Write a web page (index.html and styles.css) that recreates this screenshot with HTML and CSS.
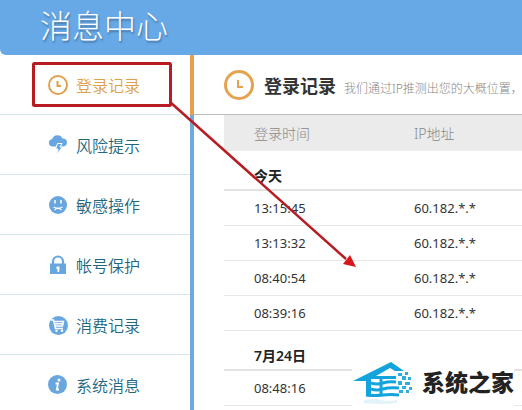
FILE: index.html
```html
<!DOCTYPE html>
<html lang="zh-CN">
<head>
    <meta charset="UTF-8">
    <meta name="viewport" content="width=device-width, initial-scale=1.0">
    <title>消息中心</title>
    <link rel="stylesheet" href="styles.css">
</head>
<body>
    <header class="header">
        <h1>消息中心</h1>
    </header>

    <div class="layout">
        <!-- Side navigation -->
        <nav class="sidebar">
            <a class="nav-item active" href="#login">
                <svg class="icon" viewBox="0 0 20 20">
                    <circle cx="10" cy="10" r="9" fill="none" stroke="currentColor" stroke-width="2"/>
                    <path d="M9.5 6v5H13" fill="none" stroke="currentColor" stroke-width="2"/>
                </svg>
                登录记录
            </a>
            <a class="nav-item" href="#risk">
                <svg class="icon" viewBox="0 0 20 20">
                    <path d="M4 11.500a3.800 3.800 0 0 1 .2-7.500A5.500 5.500 0 0 1 14.500 3.500a4 4 0 0 1 .8 8z" fill="currentColor"/>
                    <path d="M9.500 8.500h4.500l-2 3.500h2.500L8.500 19.500 10 14H7.500z" fill="currentColor" stroke="#fff" stroke-width="1"/>
                </svg>
                风险提示
            </a>
            <a class="nav-item" href="#sensitive">
                <svg class="icon" viewBox="0 0 20 20">
                    <circle cx="10" cy="10" r="9" fill="currentColor"/>
                    <path d="M7 5v3.500M13 5v3.500" fill="none" stroke="#fff" stroke-width="1.500"/>
                    <path d="M5.500 12l3 1.200h3L14.500 12M6.500 15l2-1.500h3l2 1.500" fill="none" stroke="#fff" stroke-width="1.200"/>
                </svg>
                敏感操作
            </a>
            <a class="nav-item" href="#account">
                <svg class="icon" viewBox="0 0 20 20">
                    <path d="M5 10V6.500a5 5 0 0 1 10 0V10" fill="none" stroke="currentColor" stroke-width="2.200"/>
                    <path d="M2 8.500h16V19H2z" fill="currentColor"/>
                    <path d="M8.500 11.500h3V14l-.5 3H9.500V14h-1z" fill="#fff"/>
                </svg>
                帐号保护
            </a>
            <a class="nav-item" href="#consume">
                <svg class="icon" viewBox="0 0 20 20">
                    <circle cx="10.500" cy="10.500" r="9.500" fill="currentColor"/>
                    <path d="M3 5h2.500L7.500 13.500h7.500M6 6.500h9.500l-1 4.500H7M7 8.700h8" fill="none" stroke="#fff" stroke-width="1.400"/>
                    <circle cx="8.500" cy="15.800" r="1.200" fill="#fff"/>
                    <circle cx="14" cy="15.800" r="1.200" fill="#fff"/>
                </svg>
                消费记录
            </a>
            <a class="nav-item" href="#system">
                <svg class="icon" viewBox="0 0 20 20">
                    <circle cx="9.500" cy="9.500" r="9.500" fill="currentColor"/>
                    <circle cx="11" cy="5" r="1.500" fill="#fff"/>
                    <path d="M7.500 8.500h2.500L8.800 14.500h2.200" fill="none" stroke="#fff" stroke-width="1.800"/>
                </svg>
                系统消息
            </a>
        </nav>

        <!-- Login records -->
        <main class="content">
            <div class="content-title">
                <svg class="icon-large" viewBox="0 0 30 30">
                    <circle cx="15" cy="15" r="13.500" fill="none" stroke="currentColor" stroke-width="3"/>
                    <path d="M14 10v7h5" fill="none" stroke="currentColor" stroke-width="2"/>
                </svg>
                <h2>登录记录</h2>
                <p>我们通过IP推测出您的大概位置，</p>
            </div>

            <table class="records">
                <thead>
                    <tr><th class="time">登录时间</th><th>IP地址</th></tr>
                </thead>
                <tbody>
                    <tr class="day"><th colspan="2">今天</th></tr>
                    <tr><td>13:15:45</td><td>60.182.*.*</td></tr>
                    <tr><td>13:13:32</td><td>60.182.*.*</td></tr>
                    <tr><td>08:40:54</td><td>60.182.*.*</td></tr>
                    <tr><td>08:39:16</td><td>60.182.*.*</td></tr>
                </tbody>
                <tbody>
                    <tr class="day"><th colspan="2">7月24日</th></tr>
                    <tr><td>08:48:16</td><td></td></tr>
                </tbody>
            </table>
        </main>
    </div>

    <!-- Annotation: box around the active item and the arrow -->
    <svg class="annotation" width="360" height="272" viewBox="0 0 360 272">
        <rect x="33.500" y="63.500" width="137" height="42" rx="1" fill="none" stroke="#b81c22" stroke-width="3"/>
        <path d="M170 102L346 259" stroke="#b81c22" stroke-width="2.500"/>
        <path d="M356 267l-13-3 7-9z" fill="#d8161b"/>
    </svg>

    <div class="watermark">
        <svg class="house" width="62" height="46" viewBox="0 0 62 46">
            <path d="M1 20L39 1l13 9h-9l-5-3-14 8h20v3H19v17h-5V20z" fill="#14a4dc"/>
            <path d="M19 22q6 2 12 0t13-1M19 28q6 2 12 0t16-1M14 34q9 1 17 0t16 0" fill="none" stroke="#14a4dc" stroke-width="3"/>
            <path d="M29 17v17" fill="none" stroke="#14a4dc" stroke-width="3"/>
            <path d="M46 12h4v3h-4zM53 11h3v3h-3zM50 15h4v4h-4zM56 16h3v3h-3zM46 20h4v4h-4zM53 21h5v3h-5zM50 25h4v3h-4zM57 26h3v3h-3zM47 29h4v3h-4zM54 29h3v3h-3z" fill="#2caee0"/>
            <path d="M12 39q11-2 17 0t16 0v3q-17 2-33 0z" fill="#e3f3fa"/>
        </svg>
        <span>系统之家</span>
    </div>
</body>
</html>
```
FILE: styles.css
```css
* {
    box-sizing: border-box;
}

body {
    position: relative;
    margin: 0;
    height: 100vh;
    overflow: hidden;
    background: #fff;
    color: #333;
    font-family: "Noto Sans", "Noto Sans CJK SC", sans-serif;
}

h1, h2, p {
    margin: 0;
}

.header {
    height: 55px;
    padding-left: 40px;
    background: #67a9e7;
    border-bottom-left-radius: 6px;
}

.header h1 {
    color: #fff;
    font-family: "Noto Sans CJK SC", sans-serif;
    font-size: 32px;
    font-weight: 300;
    line-height: 48px;
    text-shadow: 1px 2px 2px rgba(0, 0, 0, 0.3);
}

.layout {
    display: flex;
}

.sidebar {
    flex: 0 0 194px;
}

.nav-item {
    display: flex;
    align-items: center;
    gap: 8px;
    height: 60px;
    padding-left: 48px;
    border-right: 4px solid #6fa8dc;
    background: linear-gradient(#d5e5ef, #d5e5ef) bottom / 100% 1px no-repeat;
    color: #23677f;
    font-family: "Noto Sans CJK SC", sans-serif;
    font-size: 16px;
    font-weight: 350;
    text-decoration: none;
}

.nav-item.active {
    border-right-color: #e8a04c;
    color: #e0a04e;
}

.icon {
    width: 20px;
    height: 20px;
    color: #68a6df;
}

.active .icon {
    color: #e0a04e;
}

.content {
    flex: 1;
    min-width: 0;
}

.content-title {
    display: flex;
    align-items: center;
    height: 60px;
    padding-left: 30px;
    border-bottom: 1px solid #bbb;
    white-space: nowrap;
}

.icon-large {
    flex: none;
    width: 30px;
    height: 30px;
    color: #e5a350;
}

.content-title h2 {
    margin: 0 8px 0 10px;
    font-family: "Noto Sans CJK SC", sans-serif;
    font-size: 18px;
}

.content-title p {
    padding-top: 6px;
    color: #888;
    font-size: 12px;
    font-weight: 300;
}

.records {
    width: calc(100% - 30px);
    margin-left: 30px;
    border-collapse: separate;
    border-spacing: 0;
    table-layout: fixed;
}

.records th, .records td {
    height: 35px;
    padding: 0 0 0 30px;
    border-bottom: 1px solid #e8e8e8;
    font-size: 13px;
    text-align: left;
}

.records thead th {
    height: 36px;
    border: none;
    background: #ebebeb;
    color: #888;
    font-size: 14px;
    font-weight: 300;
}

.records .time {
    width: 160px;
}

.records .day th {
    height: 40px;
    padding-top: 10px;
    border-bottom: 2px solid #e2e2e2;
    color: #222;
    font-size: 14px;
    font-weight: 600;
}

.annotation {
    position: absolute;
    top: 0;
    left: 0;
}

.watermark {
    position: absolute;
    right: 8px;
    bottom: 3px;
    display: flex;
    gap: 8px;
    background: #fff;
    color: #222;
    font-family: "Noto Sans CJK SC", sans-serif;
    font-size: 23px;
    font-weight: 900;
    line-height: 40px;
}
```
